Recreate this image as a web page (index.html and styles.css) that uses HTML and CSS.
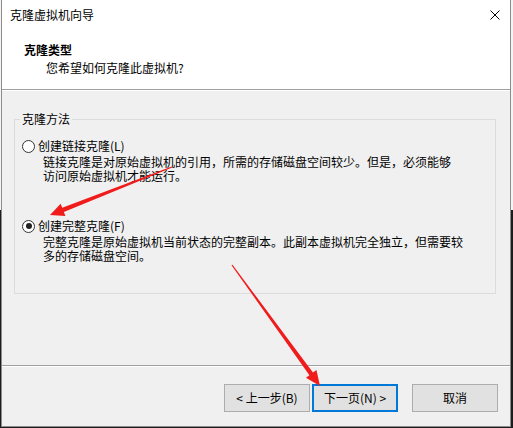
FILE: index.html
```html
<!DOCTYPE html>
<html lang="zh-CN">
<head>
<meta charset="utf-8">
<title>克隆虚拟机向导</title>
<link rel="stylesheet" href="styles.css">
</head>
<body>
<div class="window">
  <div class="titlebar">
    <span class="title">克隆虚拟机向导</span>
    <span class="close">
      <svg width="10" height="10" viewBox="0 0 10 10"><path d="M0.5 0.5 L9.5 9.5 M9.5 0.5 L0.5 9.5" stroke="#000" stroke-width="1" fill="none"/></svg>
    </span>
  </div>
  <div class="header">
    <div class="heading">克隆类型</div>
    <div class="subheading">您希望如何克隆此虚拟机?</div>
  </div>
  <div class="sep"></div>
  <div class="main">
    <div class="group">
      <span class="legend">克隆方法</span>
      <div class="option first">
        <span class="radio"></span>
        <span class="label">创建链接克隆(L)</span>
      </div>
      <div class="desc">链接克隆是对原始虚拟机的引用，所需的存储磁盘空间较少。但是，必须能够<br>访问原始虚拟机才能运行。</div>
      <div class="option second">
        <span class="radio checked"></span>
        <span class="label">创建完整克隆(F)</span>
      </div>
      <div class="desc">完整克隆是原始虚拟机当前状态的完整副本。此副本虚拟机完全独立，但需要较<br>多的存储磁盘空间。</div>
    </div>
  </div>
  <div class="sep"></div>
  <div class="footer">
    <button class="btn back">&lt; 上一步(B)</button>
    <button class="btn next">下一页(N) &gt;</button>
    <button class="btn cancel">取消</button>
  </div>
</div>
<svg class="arrows" width="513" height="428" viewBox="0 0 513 428">
  <polygon fill="#f01c1c" points="171.78,166.44 62.22,207.83 60.65,203.83 50,215 65.41,215.93 63.84,211.93 172.22,167.56"/>
  <polygon fill="#f01c1c" points="232.49,264.65 312.96,372.57 316.44,370.04 320,386 305.92,377.68 309.40,375.15 231.51,265.35"/>
</svg>
</body>
</html>
```
FILE: styles.css
```css
html, body {
  margin: 0;
  padding: 0;
}
body {
  width: 513px;
  height: 428px;
  overflow: hidden;
  position: relative;
  background: linear-gradient(#f4f4f4 0 210px, #1c1c1c 210px);
  font-family: "Noto Sans CJK SC", "Microsoft YaHei", sans-serif;
  font-size: 12px;
  color: #000;
}
.window {
  margin-left: 1px;
  width: 510px;
  height: 427px;
  box-sizing: border-box;
  border-left: 1px solid #8c8c8c;
  border-right: 1px solid #8c8c8c;
  border-bottom: 1px solid #8c8c8c;
  background: #f0f0f0;
  display: flex;
  flex-direction: column;
}
.titlebar {
  height: 30px;
  background: #fff;
  display: flex;
  align-items: center;
  justify-content: space-between;
  padding-left: 8px;
  line-height: 16px;
}
.close {
  width: 30px;
  height: 30px;
  display: flex;
  align-items: center;
  justify-content: center;
}
.close svg {
  display: block;
}
.header {
  height: 59px;
  background: #fff;
  box-sizing: border-box;
  padding-top: 12px;
  padding-left: 22px;
  line-height: 16px;
}
.heading {
  font-weight: bold;
}
.subheading {
  padding-left: 22px;
  margin-top: 2px;
}
.sep {
  height: 0;
  border-top: 1px solid #a0a0a0;
  border-bottom: 1px solid #ffffff;
}
.main {
  flex: 1;
  padding-top: 28px;
  padding-left: 12px;
}
.group {
  position: relative;
  width: 482px;
  height: 175px;
  box-sizing: border-box;
  border: 1px solid #dcdcdc;
}
.legend {
  position: absolute;
  top: -9px;
  left: 5px;
  padding: 0 2px;
  background: #f0f0f0;
  line-height: 16px;
}
.option {
  display: flex;
  align-items: center;
  padding-left: 7px;
  line-height: 16px;
  height: 16px;
}
.option.first {
  margin-top: 18px;
}
.option.second {
  margin-top: 35px;
}
.radio {
  width: 13px;
  height: 13px;
  box-sizing: border-box;
  border: 1px solid #333;
  border-radius: 50%;
  background: #fff;
  margin-right: 3px;
  position: relative;
  flex: none;
}
.radio.checked::after {
  content: "";
  position: absolute;
  left: 2.5px;
  top: 2.5px;
  width: 6px;
  height: 6px;
  border-radius: 50%;
  background: #222;
}
.desc {
  padding-left: 28px;
  margin-top: 1px;
  line-height: 14px;
  white-space: nowrap;
}
.footer {
  flex: none;
  height: 59px;
  box-sizing: border-box;
  padding-top: 17px;
  padding-right: 12px;
  display: flex;
  justify-content: flex-end;
  align-items: flex-start;
}
.btn {
  width: 86px;
  height: 28px;
  box-sizing: border-box;
  border: 1px solid #adadad;
  background: #e1e1e1;
  font-family: inherit;
  font-size: 12px;
  color: #000;
  padding: 0;
  line-height: 16px;
}
.btn.back {
  margin-right: 2px;
}
.btn.next {
  border: 2px solid #0078d7;
  margin-right: 14px;
}
.arrows {
  position: absolute;
  left: 0;
  top: 0;
  pointer-events: none;
}
```
